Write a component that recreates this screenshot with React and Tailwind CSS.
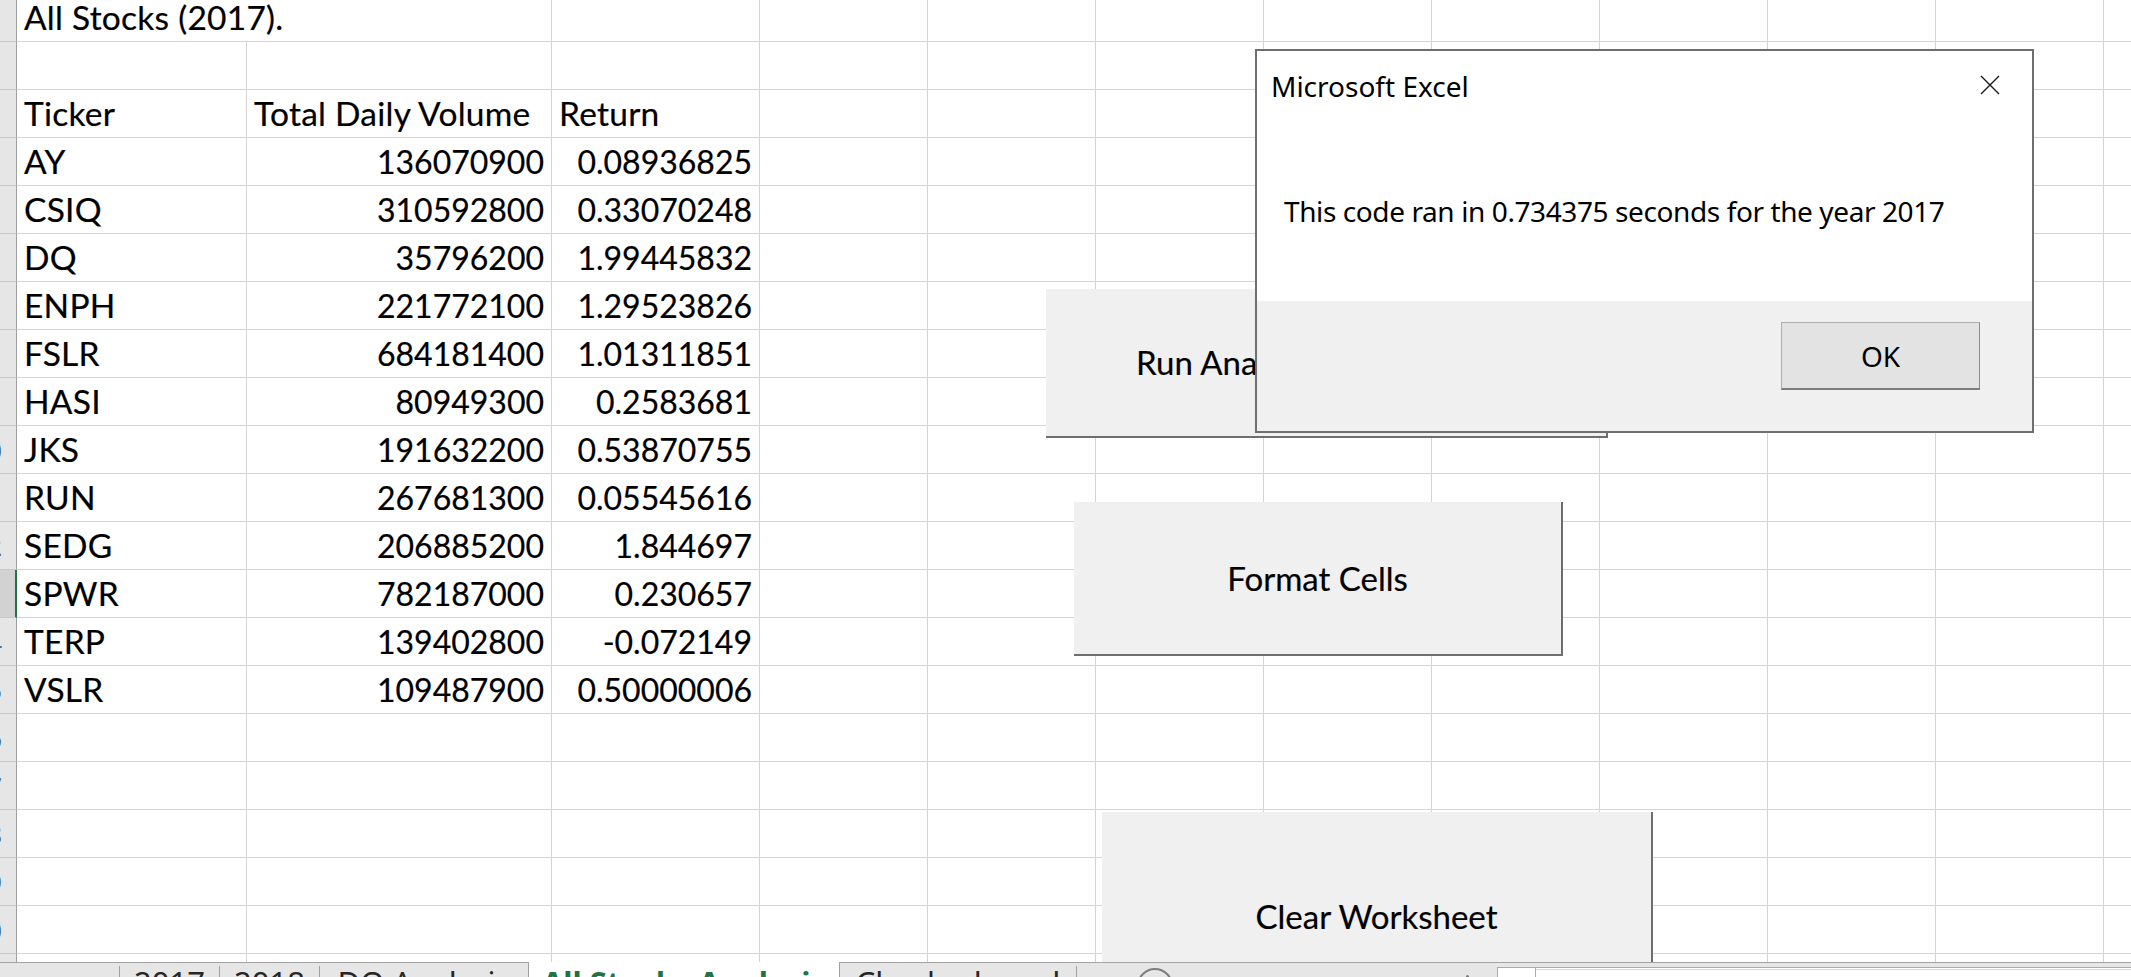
import React from 'react';

const COL_W = [
  'w-[230px]', 'w-[305px]', 'w-[208px]', 'w-[168px]', 'w-[168px]', 'w-[168px]',
  'w-[168px]', 'w-[168px]', 'w-[168px]', 'w-[168px]', 'w-[168px]', 'w-[168px]',
];

const STOCKS = [
  ['AY', '136070900', '0.08936825'],
  ['CSIQ', '310592800', '0.33070248'],
  ['DQ', '35796200', '1.99445832'],
  ['ENPH', '221772100', '1.29523826'],
  ['FSLR', '684181400', '1.01311851'],
  ['HASI', '80949300', '0.2583681'],
  ['JKS', '191632200', '0.53870755'],
  ['RUN', '267681300', '0.05545616'],
  ['SEDG', '206885200', '1.844697'],
  ['SPWR', '782187000', '0.230657'],
  ['TERP', '139402800', '-0.072149'],
  ['VSLR', '109487900', '0.50000006'],
];

// rows 1..21 of the sheet; each cell: [text, align]
const ROWS = [];
for (let n = 1; n <= 21; n++) {
  let cells = [];
  if (n === 1) cells = [['All Stocks (2017).', 'left']];
  if (n === 3) cells = [['Ticker', 'left'], ['Total Daily Volume', 'left'], ['Return', 'left']];
  if (n >= 4 && n <= 15) {
    const s = STOCKS[n - 4];
    cells = [[s[0], 'left'], [s[1], 'right'], [s[2], 'right']];
  }
  ROWS.push({ n, cells });
}

function RowHeader({ n }) {
  const sel = n === 13;
  return (
    <div
      className={`w-[17px] h-[48px] shrink-0 overflow-hidden flex justify-end items-center border-b border-b-[#c9c9c9] ${
        sel ? 'bg-[#d2d2d2] border-r-2 border-r-[#217346]' : 'bg-[#e6e6e6] border-r border-r-[#9f9f9f]'
      }`}
    >
      <div className="w-[58px] shrink-0 text-center font-['Noto_Sans',sans-serif] text-[26px] leading-none text-[#3f72b3]">
        {n}
      </div>
    </div>
  );
}

function SheetRow({ row }) {
  return (
    <div className="flex shrink-0">
      <RowHeader n={row.n} />
      {COL_W.map((w, i) => {
        const cell = row.cells[i];
        const overflowTitle = row.n === 1 && i === 0;
        const right = cell && cell[1] === 'right';
        return (
          <div
            key={i}
            className={`${w} h-[48px] shrink-0 flex items-end pb-[7px] whitespace-nowrap border-b border-[#d4d4d4] ${
              overflowTitle ? '' : 'border-r'
            } ${right ? 'justify-end pr-[7px]' : 'pl-[7px] text-[33.5px] tracking-[0.25px]'}`}
          >
            {cell ? cell[0] : null}
          </div>
        );
      })}
    </div>
  );
}

function FormButton({ className, label }) {
  return (
    <div
      className={`absolute bg-[#f0f0f0] border-b-2 border-r-2 border-[#6e6e6e] flex items-center justify-center whitespace-nowrap text-[33px] leading-none text-black ${className}`}
    >
      {label}
    </div>
  );
}

function MessageBox() {
  return (
    <div className="absolute left-[1255px] top-[49px] w-[779px] h-[384px] border-2 border-[#6f6f6f] bg-white flex flex-col font-['Noto_Sans',sans-serif] text-[28px] leading-none text-black [-webkit-text-stroke:0px]">
      <div className="h-[250px] shrink-0 flex flex-col">
        <div className="flex justify-between items-start pt-[21px] pl-[14px] pr-[32px]">
          <span>Microsoft Excel</span>
          <svg width="20" height="20" viewBox="0 0 20 20" className="mt-[3px]">
            <path d="M1 1L19 19M19 1L1 19" stroke="#1b1b1b" strokeWidth="1.4" fill="none" />
          </svg>
        </div>
        <div className="mt-[97px] pl-[27px] tracking-[-0.4px] whitespace-nowrap">
          This code ran in 0.734375 seconds for the year 2017
        </div>
      </div>
      <div className="flex-1 bg-[#f0f0f0] flex justify-end items-start pt-[21px] pr-[52px]">
        <div className="w-[199px] h-[68px] bg-[#e3e3e3] border border-[#adadad] border-b-2 border-b-[#7c7c7c] border-r-[#8c8c8c] flex items-center justify-center">
          OK
        </div>
      </div>
    </div>
  );
}

function SheetTabs() {
  return (
    <div className="h-[15px] shrink-0 bg-[#e6e6e6] shadow-[inset_0_1px_0_#a3a3a3] flex items-start overflow-hidden font-['Noto_Sans',sans-serif] text-[31px] leading-none text-[#262626]">
      <div className="w-[119px] shrink-0" />
      <div className="w-[100px] h-[40px] shrink-0 mt-[4px] border-l border-[#a0a0a0] pt-[1px] text-center">2017</div>
      <div className="w-[100px] h-[40px] shrink-0 mt-[4px] border-l border-[#a0a0a0] pt-[1px] text-center">2018</div>
      <div className="w-[209px] h-[40px] shrink-0 mt-[4px] border-l border-[#a0a0a0] pt-[1px] text-center whitespace-nowrap">DQ Analysis</div>
      <div className="w-[312px] h-[40px] shrink-0 bg-white border-l border-r border-[#a0a0a0] pt-[5px] text-center whitespace-nowrap font-bold text-[#217346]">
        All Stocks Analysis
      </div>
      <div className="w-[237px] h-[40px] shrink-0 mt-[4px] border-r border-[#a0a0a0] pt-[1px] text-center whitespace-nowrap">Checkerboard</div>
      <div className="w-[60px] shrink-0" />
      <div className="w-[36px] h-[36px] shrink-0 mt-[6px] rounded-full border-2 border-[#7d7d7d]" />
      <div className="w-[293px] shrink-0" />
      <div className="w-[3px] h-[3px] shrink-0 mt-[13px] rounded-full bg-[#7a7a7a]" />
      <div className="w-[28px] shrink-0" />
      <div className="flex-1 h-[20px] mt-[5px] bg-white border-t border-l border-[#ababab] flex">
        <div className="w-[38px] shrink-0 border-r border-[#ababab]" />
        <div className="flex-1 border-t border-[#d6d6d6] mt-[1px]" />
      </div>
    </div>
  );
}

export default function App() {
  return (
    <div className="w-[2131px] h-[977px] overflow-hidden bg-white flex flex-col">
      <div className="relative h-[962px] shrink-0 overflow-hidden font-['Lato',sans-serif] text-[32px] leading-none text-black [-webkit-text-stroke:0.2px_black]">
        <div className="-mt-[6px] flex flex-col">
          {ROWS.map((r) => (
            <SheetRow key={r.n} row={r} />
          ))}
        </div>

        <FormButton className="left-[1046px] top-[289px] w-[562px] h-[149px]" label="Run Analysis for All Stocks" />
        <FormButton className="left-[1074px] top-[502px] w-[489px] h-[154px]" label="Format Cells" />
        <FormButton className="left-[1102px] top-[812px] w-[551px] h-[210px] border-b-0" label="Clear Worksheet" />

        <MessageBox />
      </div>
      <SheetTabs />
    </div>
  );
}
